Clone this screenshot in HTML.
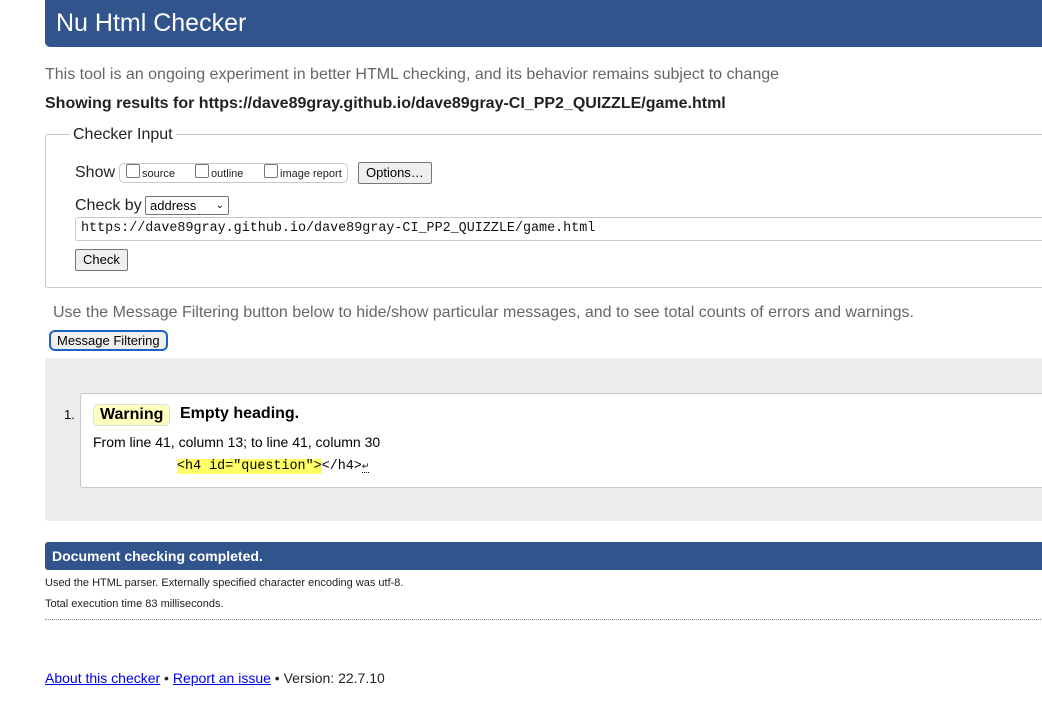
<!DOCTYPE html>
<html><head><meta charset="utf-8"><style>
body{margin:0;width:1042px;height:725px;overflow:hidden;background:#fff;font-family:"Liberation Sans",Arial,sans-serif;position:relative;color:#000}
.a{position:absolute;white-space:nowrap}
.mono{font-family:"Liberation Mono",monospace}
.btn{position:absolute;background:#efefef;border:1px solid #767676;border-radius:2px;font-size:13px;line-height:18px;padding:0 7px}
.cb{display:inline-block;width:12px;height:12px;border:1px solid #767676;border-radius:2px;vertical-align:-1px;margin-right:2px;background:#fff}
</style></head><body>
<div class="a" style="left:45px;top:0;width:1010px;height:47px;background:#30548b;border-radius:0 0 5px 5px"></div>
<div class="a" style="left:56px;top:9px;font-size:25px;color:#fff">Nu Html Checker</div>
<div class="a" style="left:45px;top:66px;font-size:16px;color:#666">This tool is an ongoing experiment in better HTML checking, and its behavior remains subject to change</div>
<div class="a" style="left:45px;top:95px;font-size:16px;font-weight:bold;color:#222">Showing results for https://dave89gray.github.io/dave89gray-CI_PP2_QUIZZLE/game.html</div>
<div class="a" style="left:45px;top:134px;width:1010px;height:152px;border:1px solid #c8c8c8;border-radius:3px"></div>
<div class="a" style="left:70px;top:126px;font-size:16px;background:#fff;padding:0 3px;color:#222">Checker Input</div>
<div class="a" style="left:75px;top:164px;font-size:16px;color:#222">Show</div>
<div class="a" style="left:119px;top:163px;width:227px;height:18px;border:1px solid #c8c8c8;border-radius:5px;font-size:11px;line-height:18px;color:#222">
<span style="position:absolute;left:6px"><span class="cb"></span>source</span>
<span style="position:absolute;left:75px"><span class="cb"></span>outline</span>
<span style="position:absolute;left:144px"><span class="cb"></span>image report</span></div>
<div class="btn" style="left:358px;top:162px;height:20px;line-height:20px">Options…</div>
<div class="a" style="left:75px;top:197px;font-size:16px;color:#222">Check by</div>
<div class="a" style="left:145px;top:196px;width:78px;height:17px;border:1px solid #767676;border-radius:2px;font-size:13px;line-height:17px;padding-left:4px">address<span style="position:absolute;right:4px;top:0;font-size:10px">&#8964;</span></div>
<div class="a mono" style="left:75px;top:217px;width:980px;height:22px;border:1px solid #c8c8c8;border-radius:3px;font-size:13.4px;line-height:22px;padding-left:5px;color:#111">https://dave89gray.github.io/dave89gray-CI_PP2_QUIZZLE/game.html</div>
<div class="btn" style="left:75px;top:249px;height:20px;line-height:20px">Check</div>
<div class="a" style="left:53px;top:304px;font-size:16px;color:#666">Use the Message Filtering button below to hide/show particular messages, and to see total counts of errors and warnings.</div>
<div class="a" style="left:49px;top:330px;height:17px;border:2px solid #1a62c8;border-radius:6px;font-size:13px;line-height:17px;padding:0 6px;background:#efefef">Message Filtering</div>
<div class="a" style="left:45px;top:358px;width:1010px;height:163px;background:#ececec;border-radius:3px"></div>
<div class="a" style="left:80px;top:393px;width:980px;height:93px;background:#fff;border:1px solid #c8c8c8;border-radius:3px"></div>
<div class="a" style="left:64px;top:407px;font-size:13px">1.</div>
<div class="a" style="left:93px;top:404px;height:20px;padding:0 6px;background:#ffffc0;border:1px solid #ddd;border-radius:5px;font-size:16px;font-weight:bold;line-height:20px">Warning</div>
<div class="a" style="left:180px;top:405px;font-size:16px;font-weight:bold">Empty heading.</div>
<div class="a" style="left:93px;top:434px;font-size:14px">From line 41, column 13; to line 41, column 30</div>
<div class="a" style="left:177px;top:458px;font-size:13.4px;font-family:'Liberation Mono',monospace;line-height:17px"><span style="background:#ffff66">&lt;h4 id="question"&gt;</span>&lt;/h4&gt;<span style="font-size:9px;border-bottom:1px dotted #000">&#8629;</span></div>
<div class="a" style="left:45px;top:542px;width:1010px;height:28px;background:#30548b;border-radius:3px"></div>
<div class="a" style="left:52px;top:548px;font-size:14px;font-weight:bold;color:#fff">Document checking completed.</div>
<div class="a" style="left:45px;top:577px;font-size:11px;color:#222">Used the HTML parser. Externally specified character encoding was utf-8.</div>
<div class="a" style="left:45px;top:598px;font-size:11px;color:#222">Total execution time 83 milliseconds.</div>
<div class="a" style="left:45px;top:619px;width:1000px;border-top:1px dotted #888"></div>
<div class="a" style="left:45px;top:670px;font-size:14px;color:#222"><span style="color:#00e;text-decoration:underline">About this checker</span> • <span style="color:#00e;text-decoration:underline">Report an issue</span> • Version: 22.7.10</div>
</body></html>
